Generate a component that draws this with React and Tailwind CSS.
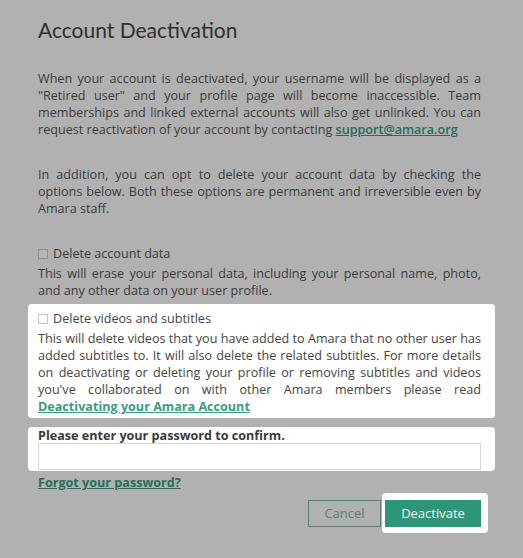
function Checkbox({ dimmed }) {
  return (
    <span
      className={
        dimmed
          ? 'inline-block w-[10px] h-[10px] border border-[#8e8e8e] bg-[#b6b6b6] mr-[5px] align-[-1px]'
          : 'inline-block w-[10px] h-[10px] border border-[#c4c4c4] bg-white mr-[5px] align-[-1px]'
      }
    />
  )
}

const videoLines = [
  'This will delete videos that you have added to Amara that no other user has',
  'added subtitles to. It will also delete the related subtitles. For more details',
  'on deactivating or deleting your profile or removing subtitles and videos',
  "you've collaborated on with other Amara members please read",
]

export default function App() {
  return (
    <div
      className="w-full min-h-[558px] bg-[#b1b1b1] pl-[38px] pr-[42px] pt-[16px] pb-[20px] text-[12.6px] leading-[17px] text-[#3b3b3b]"
      style={{ fontFamily: '"Open Sans", "Liberation Sans", sans-serif' }}
    >
      <h1
        className="text-[21px] leading-[28px] text-[#2f2f2f] font-normal"
        style={{ fontFamily: 'Lato, "Open Sans", sans-serif' }}
      >
        Account Deactivation
      </h1>

      <p className="mt-[26px] text-justify">
        When your account is deactivated, your username will be displayed as a
        "Retired user" and your profile page will become inaccessible. Team
        memberships and linked external accounts will also get unlinked. You can
        request reactivation of your account by contacting{' '}
        <a href="#" className="text-[#2b6c5a] underline font-semibold">support@amara.org</a>
      </p>

      <p className="mt-[28px] text-justify">
        In addition, you can opt to delete your account data by checking the
        options below. Both these options are permanent and irreversible even by
        Amara staff.
      </p>

      <div className="mt-[28px]">
        <label className="block">
          <Checkbox dimmed />
          Delete account data
        </label>
        <p className="mt-[3px] text-justify">
          This will erase your personal data, including your personal name, photo,
          and any other data on your user profile.
        </p>
      </div>

      <div className="mt-[5px] -ml-[10px] -mr-[14px] pl-[10px] pr-[14px] pt-[6px] pb-[3px] bg-white rounded-[4px] text-[#444]">
        <label className="block">
          <Checkbox />
          Delete videos and subtitles
        </label>
        <div className="mt-[3px]">
          {videoLines.map((line) => (
            <span key={line} className="block whitespace-nowrap text-justify [text-align-last:justify]">
              {line}
            </span>
          ))}
          <a href="#" className="text-[#3a9b7f] underline font-bold">Deactivating your Amara Account</a>
        </div>
      </div>

      <div className="mt-[9px] -ml-[10px] -mr-[14px] pl-[10px] pr-[14px] pb-[1px] bg-white rounded-[4px]">
        <label className="block font-bold text-[#3a3a3a]">Please enter your password to confirm.</label>
        <input
          type="password"
          className="block w-full h-[27px] -mt-[1px] border border-[#d6d6d6] bg-white outline-none"
        />
      </div>

      <a href="#" className="block mt-[3px] text-[#2b6c5a] underline font-bold">
        Forgot your password?
      </a>

      <div className="mt-[2px] flex justify-end items-center">
        <button className="w-[73px] h-[27px] border border-[#5a8073] text-[#5e7d73] text-[13px]">
          Cancel
        </button>
        <div className="ml-[1px] -mr-[7px] pl-[3px] pr-[7px] pt-[7px] pb-[6px] bg-white rounded-[4px]">
          <button className="block w-[96px] h-[27px] bg-[#2e9678] text-[#f2f2f2] text-[13px]">
            Deactivate
          </button>
        </div>
      </div>
    </div>
  )
}
